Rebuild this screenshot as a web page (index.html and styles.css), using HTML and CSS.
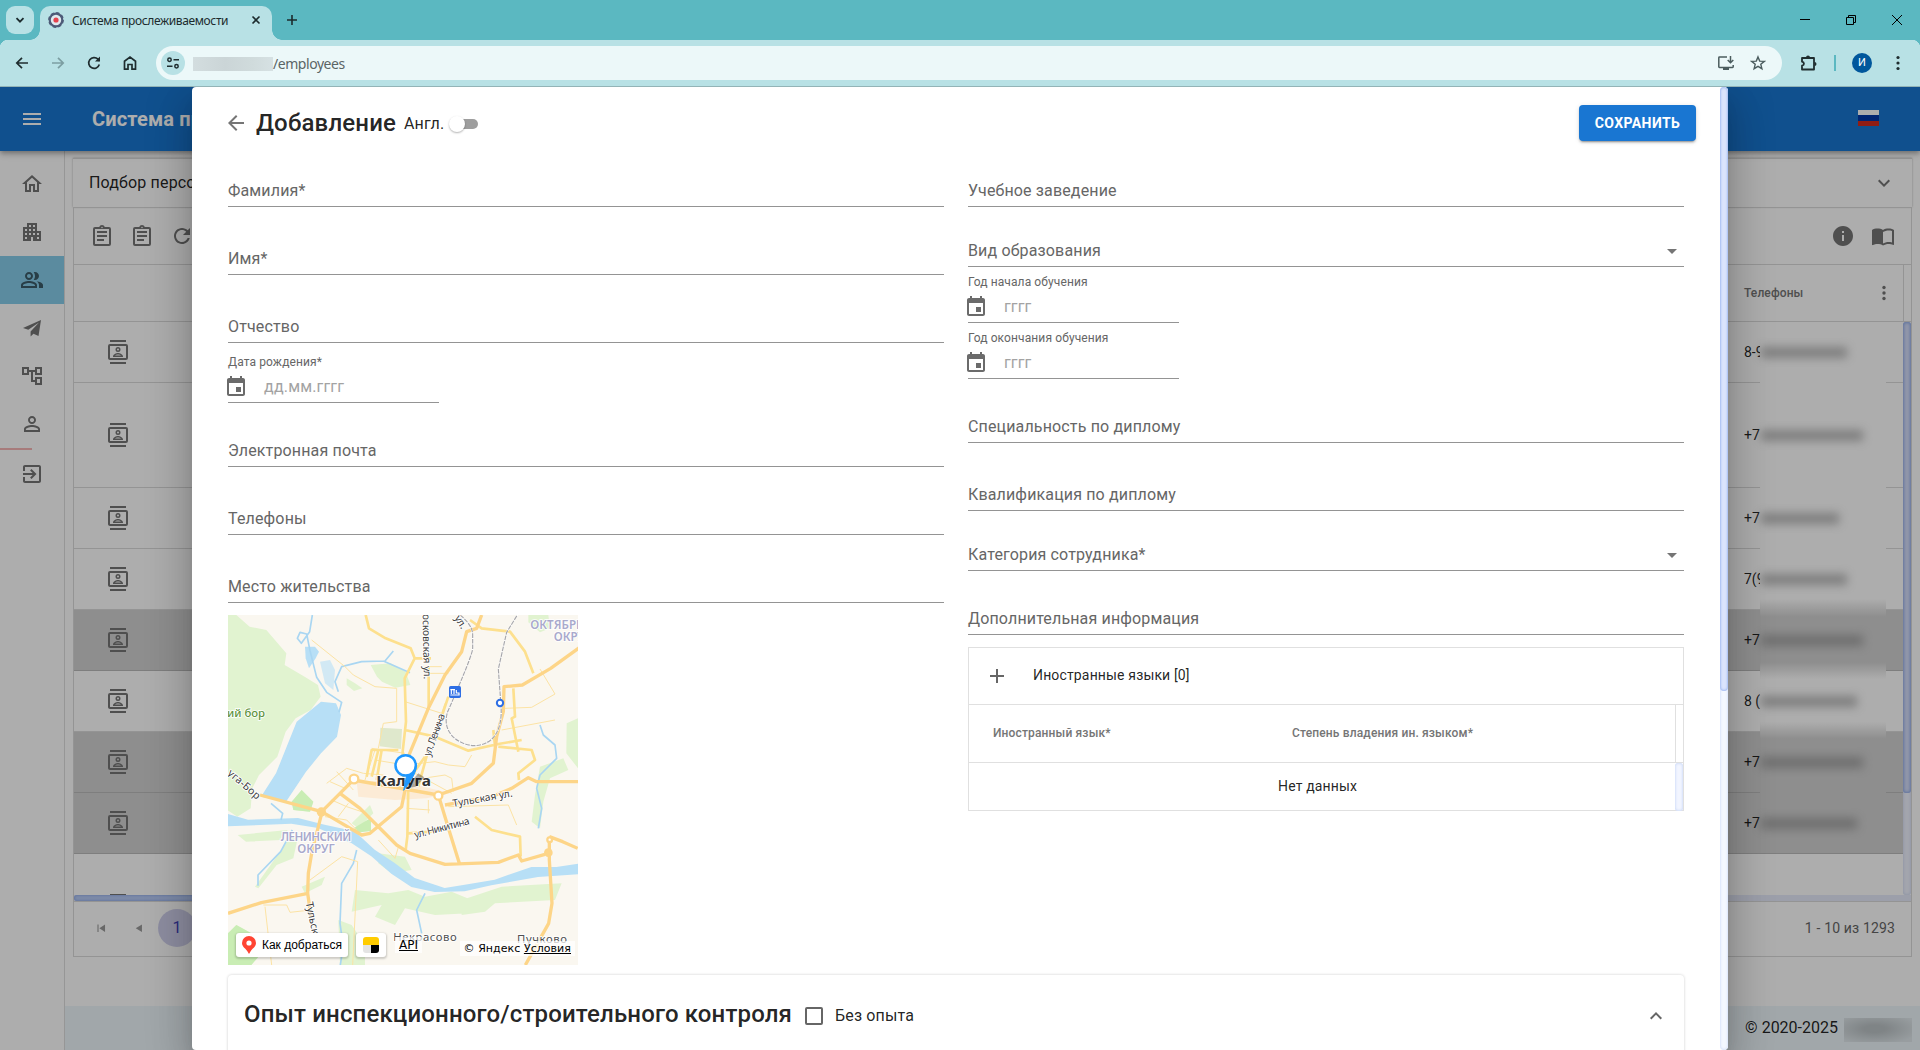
FILE: index.html
```html
<!DOCTYPE html>
<html lang="ru">
<head>
<meta charset="utf-8">
<title>Система прослеживаемости</title>
<link rel="stylesheet" href="styles.css">
</head>
<body>
<svg class="defs" width="0" height="0">
  <symbol id="contacts" viewBox="0 0 24 24"><path d="M4 0h16v2H4zM4 22h16v2H4z"/><path fill-rule="evenodd" d="M20 4H4a2 2 0 0 0-2 2v12c0 1.100.9 2 2 2h16a2 2 0 0 0 2-2V6a2 2 0 0 0-2-2zm0 14H4V6h16z"/><path fill-rule="evenodd" d="M12 12a2.500 2.500 0 1 0 0-5 2.500 2.500 0 0 0 0 5zm0-3.500a1 1 0 1 1 0 2 1 1 0 0 1 0-2zM17 16.500c0-2.200-3.300-3.500-5-3.500s-5 1.300-5 3.500v.5h10zm-8.200-1c.6-.5 2-1 3.200-1s2.600.5 3.200 1z"/></symbol>
  <symbol id="calendar" viewBox="0 0 24 24"><path d="M17 12h-5v5h5v-5zM16 1v2H8V1H6v2H5c-1.110 0-1.990.9-1.990 2L3 19c0 1.100.89 2 2 2h14c1.100 0 2-.9 2-2V5c0-1.100-.9-2-2-2h-1V1h-2zm3 18H5V8h14v11z"/></symbol>
  <symbol id="clipboard" viewBox="0 0 24 24"><path d="M7 15h7v2H7zm0-4h10v2H7zm0-4h10v2H7z"/><path fill-rule="evenodd" d="M19 3h-4.180a3 3 0 0 0-5.640 0H5a2 2 0 0 0-2 2v15a2 2 0 0 0 2 2h14a2 2 0 0 0 2-2V5a2 2 0 0 0-2-2zm-7-.25a.75.75 0 1 1 0 1.500.75.75 0 0 1 0-1.500zM19 20H5V5h14z"/></symbol>
</svg>

<div class="tabstrip">
  <div class="tab-search"><svg width="12" height="12" viewBox="0 0 12 12"><path d="M2.500 4.200 6 7.700l3.500-3.500" fill="none" stroke="#1c2b2d" stroke-width="1.800"/></svg></div>
  <div class="tab">
    <svg width="16" height="16" viewBox="0 0 16 16"><circle cx="8" cy="8" r="6.300" fill="#dfe9ee" stroke="#4d5b78" stroke-width="2.200"/><circle cx="8" cy="8" r="7.300" fill="none" stroke="#4d5b78" stroke-width="1.200" stroke-dasharray="3.400 2.330"/><circle cx="8" cy="8" r="2.600" fill="#e5424d"/></svg>
    <span class="tab-title">Система прослеживаемости</span>
    <svg class="tab-close" width="10" height="10" viewBox="0 0 10 10"><path d="m1.500 1.500 7 7m0-7-7 7" stroke="#1c2b2d" stroke-width="1.600"/></svg>
  </div>
  <svg class="tab-new" width="12" height="12" viewBox="0 0 12 12"><path d="M6 1v10M1 6h10" stroke="#1c2b2d" stroke-width="1.600"/></svg>
  <div class="win-controls">
    <svg width="12" height="12" viewBox="0 0 12 12"><path d="M1 5.500h10" stroke="#000"/></svg>
    <svg width="12" height="12" viewBox="0 0 12 12"><path d="M1.500 3.500h7v7h-7zM3.500 3.500v-2h7v7h-2" fill="none" stroke="#000"/></svg>
    <svg width="12" height="12" viewBox="0 0 12 12"><path d="m1 1 10 10M11 1 1 11" stroke="#000"/></svg>
  </div>
</div>
<div class="toolbar">
  <div class="nav">
    <svg width="16" height="16" viewBox="0 0 16 16"><path d="M14 8H3m5-5.200L2.800 8 8 13.200" fill="none" stroke="#1f2d2f" stroke-width="1.700"/></svg>
    <svg width="16" height="16" viewBox="0 0 16 16"><path d="M2 8h11M8 2.800 13.200 8 8 13.200" fill="none" stroke="#7c9ea2" stroke-width="1.700"/></svg>
    <svg width="16" height="16" viewBox="0 0 16 16"><path d="M13.300 9.500A5.400 5.400 0 1 1 12 4.200l1.500 1.600" fill="none" stroke="#1f2d2f" stroke-width="1.700"/><path d="M14 1.500v5H9z" fill="#1f2d2f"/></svg>
    <svg width="16" height="16" viewBox="0 0 16 16"><path d="M2.500 6.200 8 2l5.500 4.200v8H10V9.500H6v4.700H2.500z" fill="none" stroke="#1f2d2f" stroke-width="1.700"/></svg>
  </div>
  <div class="omnibox">
    <div class="site-info"><svg width="14" height="14" viewBox="0 0 14 14"><g fill="none" stroke="#1f2d2f" stroke-width="1.500"><circle cx="3.500" cy="3.700" r="1.700"/><path d="M7.500 3.700H13M1 10.300h5.500"/><circle cx="10.500" cy="10.300" r="1.700"/></g></svg></div>
    <span class="url-host"></span><span class="url-path">/employees</span>
    <svg class="install" width="18" height="16" viewBox="0 0 18 16"><path d="M10 2H2.500a.7.7 0 0 0-.7.7v9c0 .4.300.7.7.7h13a.7.7 0 0 0 .7-.7V10" fill="none" stroke="#4b5c5e" stroke-width="1.500"/><path d="M6 12.500h6V15H6z" fill="#4b5c5e"/><path d="M13.500 1v6.500M10.700 5l2.800 2.800L16.300 5" fill="none" stroke="#4b5c5e" stroke-width="1.500"/></svg>
    <svg width="16" height="16" viewBox="0 0 16 16"><path d="m8 1.900 1.700 4.200 4.600.3-3.500 2.900 1.100 4.400L8 11.300l-3.900 2.400 1.100-4.400-3.500-2.900 4.600-.3z" fill="none" stroke="#4b5c5e" stroke-width="1.400"/></svg>
  </div>
  <svg class="ext" width="18" height="18" viewBox="0 0 18 18"><path d="M2 4h12v11.500H2v-3.800c2.600-.6 2.600-3.400 0-4z" fill="none" stroke="#1f2d2f" stroke-width="1.800" stroke-linejoin="round"/><path d="M6 3.500a2 2 0 0 1 4 0zM14.500 8a2 2 0 0 1 0 4z" fill="#1f2d2f"/></svg>
  <span class="bar-sep"></span>
  <span class="avatar">И</span>
  <svg width="4" height="16" viewBox="0 0 4 16" fill="#1f2d2f"><circle cx="2" cy="2.500" r="1.600"/><circle cx="2" cy="8" r="1.600"/><circle cx="2" cy="13.500" r="1.600"/></svg>
</div>

<div class="viewport">
  <div class="app">
    <header class="app-header">
      <svg width="24" height="24" viewBox="0 0 24 24" fill="#fff"><path d="M3 18h18v-2H3v2zm0-5h18v-2H3v2zm0-7v2h18V6H3z"/></svg>
      <span class="app-title">Система прослеживаемости</span>
      <span class="flag"><i></i><i></i><i></i></span>
    </header>
    <div class="app-body">
      <nav class="sidebar">
        <a><svg width="24" height="24" viewBox="0 0 24 24"><path d="m12 5.690 5 4.500V18h-2v-6H9v6H7v-7.810l5-4.500M12 3 2 12h3v8h6v-6h2v6h6v-8h3L12 3z"/></svg></a>
        <a><svg width="24" height="24" viewBox="0 0 24 24"><path d="M17 11V3H7v4H3v14h8v-4h2v4h8V11h-4zM7 19H5v-2h2v2zm0-4H5v-2h2v2zm0-4H5V9h2v2zm4 4H9v-2h2v2zm0-4H9V9h2v2zm0-4H9V5h2v2zm4 8h-2v-2h2v2zm0-4h-2V9h2v2zm0-4h-2V5h2v2zm4 12h-2v-2h2v2zm0-4h-2v-2h2v2z"/></svg></a>
        <a class="active"><svg width="24" height="24" viewBox="0 0 24 24"><path d="M16.670 13.130C18.040 14.060 19 15.320 19 17v3h4v-3c0-2.180-3.570-3.470-6.330-3.870zM15 12c2.210 0 4-1.790 4-4s-1.790-4-4-4c-.47 0-.91.1-1.330.24C14.500 5.270 15 6.580 15 8s-.5 2.730-1.330 3.760c.42.140.86.24 1.330.24zM9 12c2.210 0 4-1.790 4-4s-1.790-4-4-4-4 1.790-4 4 1.790 4 4 4zm0-6c1.100 0 2 .9 2 2s-.9 2-2 2-2-.9-2-2 .9-2 2-2zm0 7c-2.670 0-8 1.340-8 4v3h16v-3c0-2.660-5.330-4-8-4zm6 5H3v-.99C3.200 16.290 6.300 15 9 15s5.800 1.290 6 2v1z"/></svg></a>
        <a><svg width="24" height="24" viewBox="0 0 24 24"><path d="M21 4 18.500 20l-5-2.200-2.900 2.700v-5L19 6.500 8.300 13.800 3 12z"/></svg></a>
        <a><svg width="24" height="24" viewBox="0 0 24 24"><path d="M22 11V3h-7v3H9V3H2v8h7V8h2v10h4v3h7v-8h-7v3h-2V8h2v3h7zM7 9H4V5h3v4zm10 6h3v4h-3v-4zm0-10h3v4h-3V5z"/></svg></a>
        <a><svg width="24" height="24" viewBox="0 0 24 24"><path d="M12 5.900c1.160 0 2.100.94 2.100 2.100s-.94 2.100-2.100 2.100S9.900 9.160 9.900 8s.94-2.100 2.100-2.100m0 9c2.970 0 6.100 1.460 6.100 2.100v1.100H5.900V17c0-.64 3.130-2.100 6.100-2.100M12 4C9.790 4 8 5.790 8 8s1.790 4 4 4 4-1.790 4-4-1.790-4-4-4zm0 9c-2.670 0-8 1.340-8 4v3h16v-3c0-2.660-5.330-4-8-4z"/></svg></a>
        <span class="timer"></span>
        <a><svg width="24" height="24" viewBox="0 0 24 24"><path d="M10.090 15.590 11.500 17l5-5-5-5-1.410 1.410L12.670 11H3v2h9.670l-2.580 2.590zM19 3H5c-1.110 0-2 .9-2 2v4h2V5h14v14H5v-4H3v4c0 1.100.89 2 2 2h14c1.100 0 2-.9 2-2V5c0-1.100-.9-2-2-2z"/></svg></a>
      </nav>
      <main class="main">
        <div class="filter-panel"><span>Подбор персонала</span><svg width="24" height="24" viewBox="0 0 24 24"><path d="M16.590 8.590 12 13.170 7.410 8.590 6 10l6 6 6-6z"/></svg></div>
        <div class="grid">
          <div class="grid-tools">
            <svg width="24" height="24"><use href="#clipboard"/></svg>
            <svg width="24" height="24"><use href="#clipboard"/></svg>
            <svg width="24" height="24" viewBox="0 0 24 24"><path d="M17.650 6.350C16.200 4.900 14.210 4 12 4c-4.420 0-7.990 3.580-7.990 8s3.570 8 7.990 8c3.730 0 6.840-2.550 7.730-6h-2.080c-.82 2.330-3.040 4-5.650 4-3.310 0-6-2.690-6-6s2.690-6 6-6c1.660 0 3.140.69 4.220 1.780L13 11h7V4l-2.350 2.350z"/></svg>
            <svg class="to-right" width="24" height="24" viewBox="0 0 24 24"><path d="M12 2C6.480 2 2 6.480 2 12s4.480 10 10 10 10-4.480 10-10S17.520 2 12 2zm1 15h-2v-6h2v6zm0-8h-2V7h2v2z"/></svg>
            <svg width="24" height="24" viewBox="0 0 24 24"><path d="M21 5c-1.110-.35-2.330-.5-3.500-.5-1.950 0-4.050.4-5.500 1.500-1.450-1.100-3.550-1.500-5.500-1.500S2.450 4.900 1 6v14.650c0 .25.250.5.5.5.1 0 .15-.05.25-.05C3.100 20.450 5.050 20 6.500 20c1.950 0 4.050.4 5.500 1.500 1.350-.85 3.800-1.500 5.500-1.500 1.650 0 3.350.3 4.750 1.050.1.050.15.050.25.050.25 0 .5-.25.5-.5V6c-.6-.45-1.250-.75-2-1zm0 13.500c-1.100-.35-2.300-.5-3.500-.5-1.700 0-4.150.65-5.500 1.500V8c1.350-.85 3.800-1.500 5.500-1.500 1.200 0 2.400.15 3.500.5v11.500z"/></svg>
          </div>
          <div class="grid-head"><span class="phone-head">Телефоны</span><svg width="4" height="16" viewBox="0 0 4 16" fill="#757575"><circle cx="2" cy="2.500" r="1.700"/><circle cx="2" cy="8" r="1.700"/><circle cx="2" cy="13.500" r="1.700"/></svg><span class="head-gap"></span></div>
          <div class="grid-body">
            <div class="rows">
              <div class="row"><svg width="24" height="24"><use href="#contacts"/></svg><span class="phone">8-9</span></div>
              <div class="row tall"><svg width="24" height="24"><use href="#contacts"/></svg><span class="phone">+7</span></div>
              <div class="row"><svg width="24" height="24"><use href="#contacts"/></svg><span class="phone">+7</span></div>
              <div class="row"><svg width="24" height="24"><use href="#contacts"/></svg><span class="phone">7(9</span></div>
              <div class="row grey"><svg width="24" height="24"><use href="#contacts"/></svg><span class="phone">+7</span></div>
              <div class="row"><svg width="24" height="24"><use href="#contacts"/></svg><span class="phone">8 (</span></div>
              <div class="row grey"><svg width="24" height="24"><use href="#contacts"/></svg><span class="phone">+7</span></div>
              <div class="row grey"><svg width="24" height="24"><use href="#contacts"/></svg><span class="phone">+7</span></div>
              <div class="row tall"><svg width="24" height="24"><use href="#contacts"/></svg></div>
              <div class="redact">
                <i class="w1"></i><i class="w2 tall"></i><i class="w3"></i><i class="w1"></i><i class="w2"></i><i class="w4"></i><i class="w2"></i><i class="w4"></i>
              </div>
            </div>
            <div class="vscroll"><i></i></div>
          </div>
          <div class="hscroll"><i></i></div>
          <div class="pager">
            <svg width="20" height="20" viewBox="0 0 24 24"><path d="M5 5h2v14H5zM19 5v14L8.500 12z" transform="translate(4.500 4.500) scale(.65)"/></svg>
            <svg width="20" height="20" viewBox="0 0 24 24"><path d="M17 5v14L5.500 12z" transform="translate(4.500 4.500) scale(.65)"/></svg>
            <span class="page">1</span>
            <span class="count">1 - 10 из 1293</span>
          </div>
        </div>
        <footer class="footer"><span>© 2020-2025</span><i></i></footer>
      </main>
    </div>
  </div>

  <div class="backdrop">
    <section class="dialog">
      <div class="dialog-main">
        <div class="dialog-head">
          <svg width="24" height="24" viewBox="0 0 24 24" fill="#757575"><path d="M20 11H7.830l5.590-5.590L12 4l-8 8 8 8 1.410-1.410L7.830 13H20v-2z"/></svg>
          <h1>Добавление</h1>
          <span class="lang">Англ.</span>
          <span class="switch"></span>
          <button class="save">СОХРАНИТЬ</button>
        </div>
        <div class="form">
          <div class="col">
            <div class="field">Фамилия*</div>
            <div class="field far">Имя*</div>
            <div class="field far">Отчество</div>
            <div class="date first"><span class="cap">Дата рождения*</span><div><svg width="24" height="24"><use href="#calendar"/></svg><span>дд.мм.гггг</span></div></div>
            <div class="field email">Электронная почта</div>
            <div class="field far">Телефоны</div>
            <div class="field far">Место жительства</div>
            <div class="map">
              <svg width="350" height="350" viewBox="39 45 1050 1050">
                <rect x="39" y="45" width="1050" height="1050" fill="#faf7f0"/>
                <g fill="#e1f3d0">
                  <path d="M39 45h25l40 35 50 10 60 70-5 35 60 35 40 25 8 35-30 40-45 25-30 40-25 75-55 55-20 40-5 60-40 25-30-20H39z"/>
                  <path d="M467 195l60-5 45 25 14 40-45 8-40-18-15-15zM395 235l25 15 22 15-25 8-22-18zM940 45h60l5 40-30 12-35-30zM1055 370l34-15v150l-35-45zM975 500l70-25 15 35-55 25-20 70-10 80-25-20 10-80zM230 605l30-35 35 35-10 30-50-5zM410 670l55-55 10 25-45 45zM68 705l150-15-20 30-105 5zM120 860l100-140 30-15-15 70-50 20-55 70zM260 860l70-30-10 25-50 25zM490 760l80 10 20 40-60 10-40-30zM420 870l100 10 60-10 50 20 80-15 60 25-10 40-100 5-90-20-30 50-60-25 20-35-90 20zM740 900l120-40 180-10-20 50-180 10-30 25-70 10zM39 1000l25-25 45 25 30 60-30 35H39zM370 960l40 15 40 60v60h-75z"/>
                </g>
                <path d="M230 605l30-35 35 35-10 30-50-5zM418 683l50-30v40l-45 5zM39 1000l25-25 45 25 30 60-30 35H39z" fill="#c9edb4"/>
                <path d="M496 383l65 4-3 60-64-8z" fill="#dfe8cc"/>
                <path d="M425 545l120-5 160 40-70 15-95 5-110-10z" fill="#fcebd6"/>
                <g fill="#b7dff6">
                  <path d="M318 305l45 5 15 35-12 65-48 50-45 55-60 90-75-15 45-70 62-155z"/>
                  <path d="M315 185l30-5 15 30-5 60-25-20z" opacity=".6"/>
                  <path d="M39 642l60 17 150-5 80 20 90 20 60 55 60 40 60 45 90 30 60-10 90-15 110-38h75l65-10v32l-120 8-140 25-80 18-90 2-70-15-60-40-60-52-60-40-100-45-80-13-190 8z"/>
                  <path d="M270 140h30l12 15-10 20-20 30-10-30z"/>
                </g>
                <g fill="none" stroke="#a9d6f2" stroke-width="5" stroke-linejoin="round">
                  <path d="M292 45l-8 50-25 35-12-15 8-18 20 5 10 50 20 80 30 45 45 30-8 30"/>
                  <path d="M370 275l-10-30 20-45 60-15 70-2 25-30M505 183l80 35"/>
                  <path d="M168 610l35 30-5 20M232 690l-35 65-68 70v32M425 750l-10 40-35 60-5 120 10 70-10 60M630 880l-25 50 15 70M975 375l10 30 35 30 5 40-50 50-10 40 15 60-10 60"/>
                </g>
                <g fill="none" stroke="#fce3a4" stroke-width="3">
                  <path d="M290 120l100 80 25 25 65 35 65 5v100l-40 5-15 75M570 305l110 35 10-30M345 545l45 20M335 550l60-45 50 15 60 5M350 600l45 20 60 20M365 515l50 55M870 325l80-3 70-40-45-75M860 390l160-30M480 480l90 15 90-10 40 10 50 5 20-35M590 540l100-15 20 10 5 40M640 600v40M700 620l180-5 25 60M600 520l110 60M575 625l70 5M330 650l65 10 30 30M400 610l-30 40M145 915h70l10 22 45-5M150 920l20 175M490 720l50 55 12-40M285 840l95-70 48 15-15 310M640 220h60M640 200h40M470 445l100 15M450 540l30-90"/>
                </g>
                <g fill="none" stroke="#fde08e" stroke-width="8" stroke-linejoin="round">
                  <path d="M452 45l10 40 50 30 75 30 12 30-30 60 4 130-10 90 2 80M598 175h50M641 200v120M470 530l20-80M455 530l15-80h80M500 450l-15 90M765 60l35 25 85 10 45 60 25 65M570 390l90 20 100 42 90-20 70-12M895 265l5 85-10 5 20 100M580 560l-3 150-5 40M560 570l70-100M580 700l70-5M780 650l50 40 85 20 2 60M850 440l100 10 10 30-50 40 2 20M640 450l-30 110M700 290l-20 60M840 440l-5-50"/>
                </g>
                <g fill="none" stroke="#fdd588" stroke-width="10" stroke-linejoin="round">
                  <path d="M135 585l185 50 120 70 25-5 95-80 10-50M800 45l-15 40-30 10-15 60-50 70-50 100-60 145M320 635l55-55 40-40 255 45 100-35 65-60 10-80 20-75 2-75 55-5 85-50 90-65"/>
                  <path d="M375 580l60 45 50 50 60 60 40 25 105 33 160-6 60-22 10 18 70-20M670 585l35 115 28 90M320 640l-30 120-10 60-2 60 10 70M39 940l100-32 140-28M690 615l140-25 60-25 50-32 25 12h125M1003 710l40 15 45 20M1003 710v70l8 130-10 60-70 125"/>
                </g>
                <g fill="#fff" stroke="#fdd588" stroke-width="7"><circle cx="417" cy="537" r="13"/><circle cx="670" cy="587" r="12"/><circle cx="1004" cy="719" r="7"/></g>
                <circle cx="319" cy="636" r="14" fill="#fdd588"/><circle cx="1000" cy="758" r="13" fill="#fdd588"/>
                <path d="M735 45q38 30 38 60v40q0 20-75 190c-20 60 30 100 80 102 60-2 85-50 80-120l-8-110 25-110 32-52" fill="none" stroke="#fff" stroke-width="5"/>
                <path d="M735 45q38 30 38 60v40q0 20-75 190c-20 60 30 100 80 102 60-2 85-50 80-120l-8-110 25-110 32-52" fill="none" stroke="#a7a7ab" stroke-width="3.500" stroke-dasharray="14 3"/>
                <rect x="702" y="258" width="36" height="36" rx="5" fill="#2f6fe4"/><path d="M706 269h14M709 270v12M717 270v12M706 285h28M724 270v9h8v6" stroke="#fff" stroke-width="3.500" fill="none"/>
                <circle cx="855" cy="309" r="9.500" fill="#fff" stroke="#2f6fe4" stroke-width="6"/>
                <g class="map-text">
                  <text class="wood" x="36" y="350">ий бор</text>
                  <text class="district" x="303" y="723" text-anchor="middle" textLength="212">ЛЕНИНСКИЙ</text>
                  <text class="district" x="303" y="759" text-anchor="middle">ОКРУГ</text>
                  <text class="district" x="946" y="87">ОКТЯБРЬСКИЙ</text>
                  <text class="district" x="1016" y="123">ОКРУГ</text>
                  <text class="street" transform="translate(623 42) rotate(89)" textLength="196">осковская ул.</text>
                  <text class="street" transform="translate(718 54) rotate(58)">ул.</text>
                  <text class="street" transform="translate(645 471) rotate(-70)" textLength="134">ул. Ленина</text>
                  <text class="street" transform="translate(715 621) rotate(-10)" textLength="182">Тульская ул.</text>
                  <text class="street" transform="translate(601 715) rotate(-14.500)" textLength="170">ул. Никитина</text>
                  <text class="street" transform="translate(36 522) rotate(41)" textLength="118">уга-Бор</text>
                  <text class="street" transform="translate(272 908) rotate(78)">Тульская</text>
                  <text class="village" x="535" y="1022" textLength="190">Некрасово</text>
                  <text class="village" x="906" y="1028" textLength="150">Пучково</text>
                  <text class="city" x="484" y="557" textLength="164" lengthAdjust="spacingAndGlyphs">Калуга</text>
                </g>
                <path d="M572 565l38-45 18 12-25 28z" fill="#000" opacity=".3"/>
                <path d="M603 505c-3 22-22 45-37 66l9-45z" fill="#1e98ff" stroke="#1e98ff" stroke-width="3"/>
                <circle cx="572" cy="496" r="30.500" fill="#fff" stroke="#1e98ff" stroke-width="7.500"/>
              </svg>
              <span class="map-route"><svg width="14" height="18" viewBox="0 0 14 18"><path d="M7 0a7 7 0 0 1 7 7c0 4-4 5.500-5.500 8.500L7 18l-1.500-2.500C4 12.500 0 11 0 7a7 7 0 0 1 7-7z" fill="#ff4433"/><circle cx="7" cy="7" r="2.600" fill="#fff"/></svg>Как добраться</span>
              <span class="map-taxi"><svg width="16" height="16" viewBox="0 0 16 16"><path d="M0 8V3a3 3 0 0 1 3-3h10a3 3 0 0 1 3 3v5z" fill="#fc0"/><path d="M8 8h8v5a3 3 0 0 1-3 3H8z" fill="#000"/><path d="M0 8h8v8H3a3 3 0 0 1-3-3z" fill="#e4e4e4"/></svg></span>
              <span class="map-api">API</span>
              <span class="map-copy">© Яндекс <u>Условия</u></span>
            </div>
          </div>
          <div class="col">
            <div class="field">Учебное заведение</div>
            <div class="field near">Вид образования<svg width="24" height="24" viewBox="0 0 24 24"><path d="m7 10 5 5 5-5z"/></svg></div>
            <div class="date"><span class="cap">Год начала обучения</span><div><svg width="24" height="24"><use href="#calendar"/></svg><span>гггг</span></div></div>
            <div class="date"><span class="cap">Год окончания обучения</span><div><svg width="24" height="24"><use href="#calendar"/></svg><span>гггг</span></div></div>
            <div class="field email">Специальность по диплому</div>
            <div class="field far">Квалификация по диплому</div>
            <div class="field near">Категория сотрудника*<svg width="24" height="24" viewBox="0 0 24 24"><path d="m7 10 5 5 5-5z"/></svg></div>
            <div class="field extra">Дополнительная информация</div>
            <div class="langs">
              <div class="langs-title"><svg width="24" height="24" viewBox="0 0 24 24" fill="#666"><path d="M19 13h-6v6h-2v-6H5v-2h6V5h2v6h6v2z"/></svg><span>Иностранные языки [0]</span></div>
              <div class="langs-head"><span>Иностранный язык*</span><span>Степень владения ин. языком*</span></div>
              <div class="langs-empty"><span>Нет данных</span><i></i></div>
            </div>
          </div>
        </div>
        <div class="experience">
          <h2>Опыт инспекционного/строительного контроля</h2>
          <span class="check"></span>
          <span class="check-label">Без опыта</span>
          <svg width="24" height="24" viewBox="0 0 24 24" fill="#666"><path d="m12 8-6 6 1.410 1.410L12 10.830l4.590 4.580L18 14z"/></svg>
        </div>
      </div>
      <div class="dialog-scroll"><i></i></div>
    </section>
  </div>
</div>
</body>
</html>
```
FILE: styles.css
```css
* { box-sizing: border-box; }
body {
  margin: 0;
  width: 1920px;
  height: 1050px;
  overflow: hidden;
  display: flex;
  flex-direction: column;
  font-family: Roboto, "Liberation Sans", sans-serif;
  color: rgba(0, 0, 0, .87);
}
svg { display: block; flex: none; }
.defs { position: absolute; }
i { display: block; }

/* browser chrome */
.tabstrip {
  height: 40px;
  flex: none;
  background: #5bb8c1;
  display: flex;
  align-items: center;
  padding: 0 17px 0 6px;
  font-family: "Noto Sans", sans-serif;
}
.tab-search {
  width: 28px;
  height: 28px;
  border-radius: 9px;
  background: #b8e1e5;
  display: grid;
  place-items: center;
}
.tab {
  position: relative;
  align-self: flex-end;
  width: 232px;
  height: 34px;
  margin-left: 6px;
  padding: 0 11px 6px 8px;
  border-radius: 10px 10px 0 0;
  background: #b8e1e5;
  display: flex;
  align-items: center;
}
.tab::before, .tab::after {
  content: "";
  position: absolute;
  bottom: 0;
  width: 10px;
  height: 10px;
}
.tab::before { left: -10px; background: radial-gradient(circle at 0 0, transparent 9.500px, #b8e1e5 10px); }
.tab::after { right: -10px; background: radial-gradient(circle at 100% 0, transparent 9.500px, #b8e1e5 10px); }
.tab-title { margin-left: 8px; font-size: 12px; letter-spacing: -.37px; white-space: nowrap; color: #1c2b2d; }
.tab-close { margin-left: auto; }
.tab-new { margin-left: 14px; }
.win-controls { margin-left: auto; display: flex; gap: 34px; }
.toolbar {
  height: 47px;
  flex: none;
  background:
    radial-gradient(circle at 8px 8px, #b8e1e5 8px, #5bb8c1 8.500px) 0 0 / 8px 8px no-repeat,
    radial-gradient(circle at 0 8px, #b8e1e5 8px, #5bb8c1 8.500px) 100% 0 / 8px 8px no-repeat,
    #b8e1e5;
  border-bottom: 1px solid #93b4b7;
  display: flex;
  align-items: center;
  padding: 0 20px 0 14px;
}
.nav { display: flex; gap: 20px; width: 142px; flex: none; }
.omnibox {
  width: 1626px;
  height: 34px;
  border-radius: 17px;
  background: #ecf8f9;
  display: flex;
  align-items: center;
  padding: 0 16px 0 5px;
}
.site-info {
  width: 24px;
  height: 24px;
  border-radius: 50%;
  background: #b8e1e5;
  display: grid;
  place-items: center;
}
.url-host { width: 80px; height: 14px; margin: 2px 0 0 8px; background: linear-gradient(90deg, #d3dddf, #cbd5d7 40%, #d0dbdc 75%, #d6e1e3); }
.url-path { font: 14px "Noto Sans", sans-serif; letter-spacing: -.45px; color: #5b6566; }
.install { margin-left: auto; margin-right: 15px; }
.ext { margin-left: 18px; }
.bar-sep { width: 2px; height: 16px; margin-left: 16px; background: #5bb8c1; }
.avatar {
  width: 20px;
  height: 20px;
  margin: 0 24px 0 16px;
  border-radius: 50%;
  background: #00579c;
  color: #fff;
  font-size: 11px;
  line-height: 20px;
  text-align: center;
}

/* application behind the dialog */
.viewport { position: relative; flex: 1; overflow: hidden; }
.app { height: 100%; display: flex; flex-direction: column; isolation: isolate; }
.app-header {
  position: relative;
  z-index: 1;
  height: 64px;
  flex: none;
  background: #1976d2;
  box-shadow: 0 2px 4px -1px rgba(0, 0, 0, .2), 0 4px 5px rgba(0, 0, 0, .14), 0 1px 10px rgba(0, 0, 0, .12);
  display: flex;
  align-items: center;
  padding: 0 41px 0 20px;
}
.app-title { margin-left: 48px; font-size: 20px; font-weight: 700; letter-spacing: .15px; color: #fff; }
.flag { width: 21px; margin: -3px 0 0 auto; }
.flag i { height: 5px; background: #fff; }
.flag i:nth-child(2) { height: 6px; background: #0037a8; }
.flag i:nth-child(3) { background: #d52b1e; }
.app-body { flex: 1; display: flex; min-height: 0; }
.sidebar { width: 65px; border-right: 1px solid #dedede; padding-top: 9px; }
.sidebar a { display: grid; place-items: center; height: 48px; }
.sidebar svg, .grid svg, .filter-panel svg { fill: #757575; }
.sidebar .active { background: #87cdea; }
.sidebar .active svg { fill: #3c5c69; }
.timer { display: block; width: 32px; height: 2px; background: #f6b5b5; }
.main { flex: 1; min-width: 0; display: flex; flex-direction: column; }
.filter-panel {
  height: 49px;
  flex: none;
  margin: 7px 8px 0;
  border-top: 1px solid #dcdcdc;
  box-shadow: 0 0 2px rgba(0, 0, 0, .3);
  display: flex;
  align-items: center;
  justify-content: space-between;
  padding: 0 16px;
  font-size: 16px;
  letter-spacing: .15px;
}
.filter-panel span { padding-bottom: 2px; }
.grid {
  height: 750px;
  flex: none;
  margin: 0 8px;
  border: 1px solid #dadada;
  display: flex;
  flex-direction: column;
}
.grid-tools {
  height: 57px;
  flex: none;
  border-bottom: 1px solid #dadada;
  display: flex;
  align-items: center;
  gap: 16px;
  padding: 0 16px;
}
.grid-tools .to-right { margin-left: auto; }
.grid-head {
  height: 57px;
  flex: none;
  border-bottom: 1px solid #dadada;
  display: flex;
  align-items: center;
  justify-content: flex-end;
}
.phone-head { width: 138px; font-size: 12px; font-weight: 500; letter-spacing: .1px; color: #757575; }
.head-gap { align-self: stretch; width: 8px; margin-left: 17px; border-left: 1px solid #dadada; }
.grid-body { height: 573px; flex: none; display: flex; }
.rows { position: relative; flex: 1; overflow: hidden; }
.row { height: 61px; border-bottom: 1px solid #dadada; display: flex; align-items: center; padding-left: 32px; }
.row.tall { height: 105px; }
.row.grey { background: #d1d1d1; border-color: #bababa; }
.phone { width: 16px; margin-left: auto; margin-right: 143px; overflow: hidden; font-size: 14px; white-space: nowrap; }
.redact {
  position: absolute;
  top: 0;
  right: 17px;
  width: 126px;
  height: 514px;
  background: linear-gradient(#fff 277px, #d1d1d1 295px, #d1d1d1 340px, #fff 357px, #fff 400px, #d1d1d1 417px);
}
.redact i { height: 61px; padding: 25px 0 0 1px; }
.redact i.tall { height: 105px; padding-top: 47px; }
.redact i::before { content: ""; display: block; height: 11px; background: #777; opacity: .5; filter: blur(5px); }
.redact .w1::before { width: 86px; }
.redact .w2::before { width: 102px; }
.redact .w3::before { width: 78px; }
.redact .w4::before { width: 96px; }
.vscroll { width: 8px; background: #f0f3ff; box-shadow: inset 0 0 3px #c3d0ee; border-radius: 3px; }
.vscroll i { height: 471px; border-radius: 3px; background: #d6defa; box-shadow: inset 0 0 3px 1px #8faae8; }
.hscroll { height: 7px; flex: none; background: #e6ebfb; border-bottom: 1px solid #dadada; }
.hscroll i { width: 900px; height: 6px; border-radius: 3px; background: #b9cdf8; box-shadow: inset 0 0 3px #7c9ae0; }
.pager { flex: 1; display: flex; align-items: center; padding: 0 16px 2px 17px; }
.pager svg { margin-right: 18px; fill: #9a9a9a; }
.page { width: 38px; height: 38px; margin-left: -9px; border-radius: 50%; background: #d0d0ec; color: #3f3fb5; font-size: 16px; line-height: 37px; text-align: center; }
.count { margin-left: auto; font-size: 14px; letter-spacing: .15px; color: #666; }
.footer {
  margin-top: auto;
  height: 44px;
  background: #eef7fb;
  display: flex;
  align-items: center;
  justify-content: flex-end;
  padding: 0 8px 2px 0;
  font-size: 16px;
}
.footer i { width: 68px; height: 24px; margin: 6px 0 0 6px; background: radial-gradient(ellipse at 45% 45%, #bcc3c6 20%, #e0e8ec 85%); }

/* dialog */
.backdrop { position: absolute; inset: 0; z-index: 2; background: rgba(0, 0, 0, .32); display: flex; justify-content: center; }
.dialog {
  width: 1536px;
  height: 963px;
  border-radius: 4px;
  background: #fff;
  box-shadow: 0 11px 15px -7px rgba(0, 0, 0, .2), 0 24px 38px 3px rgba(0, 0, 0, .14), 0 9px 46px 8px rgba(0, 0, 0, .12);
  display: flex;
  overflow: hidden;
}
.dialog-main { flex: 1; overflow: hidden; }
.dialog-scroll { width: 8px; background: #f4f8ff; box-shadow: inset 0 0 2px 1px #dbe5fb; border-radius: 4px; }
.dialog-scroll i { height: 604px; border-radius: 4px; background: #dbe4fc; box-shadow: inset 0 0 2px 1px #a5bdf3; }
.dialog-head { height: 72px; display: flex; align-items: center; padding: 0 32px 0 32px; }
h1, h2 { margin: 0; font-size: 24px; font-weight: 500; line-height: 32px; letter-spacing: .15px; white-space: nowrap; }
h1 { margin-left: 8px; }
.lang { margin-left: 8px; font-size: 16px; letter-spacing: .15px; }
.switch { position: relative; width: 26px; height: 10px; margin: 2px 0 0 8px; border-radius: 5px; background: #9e9e9e; }
.switch::before {
  content: "";
  position: absolute;
  left: -3px;
  top: -3px;
  width: 16px;
  height: 16px;
  border-radius: 50%;
  background: #fff;
  box-shadow: 0 1px 2px rgba(0, 0, 0, .3);
}
.save {
  width: 117px;
  height: 36px;
  margin-left: auto;
  margin-right: -8px;
  border: 0;
  border-radius: 4px;
  padding: 0;
  background: #1976d2;
  color: #fff;
  font: 700 14px Roboto, sans-serif;
  letter-spacing: .4px;
  box-shadow: 0 3px 1px -2px rgba(0, 0, 0, .2), 0 2px 2px rgba(0, 0, 0, .14), 0 1px 5px rgba(0, 0, 0, .12);
}
.form { display: grid; grid-template-columns: 716px 716px; gap: 24px; padding-left: 36px; }
.field {
  display: flex;
  align-items: center;
  justify-content: space-between;
  height: 48px;
  padding-top: 16px;
  border-bottom: 1px solid #949494;
  font-size: 16px;
  letter-spacing: .15px;
  color: #666;
}
.field svg { fill: #757575; }
.far { margin-top: 20px; }
.near { margin-top: 12px; }
.email { margin-top: 16px; }
.extra { margin-top: 16px; }
.date { width: 211px; margin-top: 8px; height: 48px; border-bottom: 1px solid #949494; display: flex; flex-direction: column; color: #666; }
.date.first { margin-top: 12px; }
.cap { font-size: 12px; line-height: 14px; letter-spacing: .11px; }
.date div { flex: 1; display: flex; align-items: center; margin-left: -4px; padding-top: 2px; }
.date svg { fill: #6b6b6b; }
.date div span { margin-left: 16px; font-size: 16px; color: #a3a3a3; letter-spacing: .15px; }
.map { position: relative; width: 350px; height: 350px; margin-top: 12px; overflow: hidden; }
.map-text text { font-family: "Noto Sans", sans-serif; paint-order: stroke; stroke: #fff; stroke-width: 5px; }
.map-text .street { font-size: 31px; fill: #3c3c3c; }
.map-text .village { font-size: 34px; fill: #505050; }
.map-text .wood { font-size: 34px; fill: #5f9340; font-weight: 500; }
.map-text .district { font-size: 35px; fill: #a9a9cc; font-weight: 600; }
.map-text .city { font-size: 45px; font-weight: 700; fill: #333; }
.map-route, .map-taxi, .map-api, .map-copy { position: absolute; font-size: 12px; color: #000; }
.map-route, .map-taxi { height: 24px; bottom: 8px; border-radius: 3px; background: #fff; box-shadow: 0 1px 2px 1px rgba(0, 0, 0, .18); display: flex; align-items: center; justify-content: center; }
.map-route { left: 8px; width: 112px; gap: 6px; font-family: "Liberation Sans", sans-serif; white-space: nowrap; }
.map-taxi { left: 128px; width: 30px; }
.map-api { left: 167px; bottom: 12px; padding: 0 4px; background: rgba(255, 255, 255, .7); text-decoration: underline; font-family: "DejaVu Sans", sans-serif; font-size: 12px; line-height: 16px; }
.map-copy { right: 3px; bottom: 9px; padding: 0 4px; background: rgba(255, 255, 255, .7); font-family: "DejaVu Sans", sans-serif; font-size: 11px; line-height: 15px; letter-spacing: .05px; white-space: nowrap; }
.langs { height: 164px; margin-top: 12px; border: 1px solid #e0e0e0; font-size: 14px; letter-spacing: .15px; }
.langs-title { height: 57px; border-bottom: 1px solid #e0e0e0; display: flex; align-items: center; gap: 24px; padding-left: 16px; }
.langs-title span { padding-bottom: 2px; }
.langs-head { height: 57px; margin-right: 7px; border-right: 1px solid #e0e0e0; display: flex; align-items: center; padding: 0 0 2px 24px; font-size: 12px; font-weight: 500; color: #757575; }
.langs-head span { width: 299px; }
.langs-empty { height: 49px; border-top: 1px solid #e0e0e0; display: flex; justify-content: space-between; padding-left: 309px; line-height: 46px; }
.langs-empty i { width: 8px; height: 48px; border-radius: 3px; background: #f2f5ff; box-shadow: inset 0 0 3px #b9cdf3; }
.experience {
  height: 120px;
  margin: 10px 36px 0;
  border-radius: 4px;
  box-shadow: 0 0 3px rgba(0, 0, 0, .2);
  display: flex;
  align-items: flex-start;
  padding: 23px 16px 0 16px;
}
.check { width: 18px; height: 18px; margin: 9px 0 0 13px; border: 2px solid #666; border-radius: 2px; }
.check-label { margin: 8px 0 0 12px; font-size: 16px; letter-spacing: .15px; }
.experience svg { margin: 6px 0 0 auto; }
```
